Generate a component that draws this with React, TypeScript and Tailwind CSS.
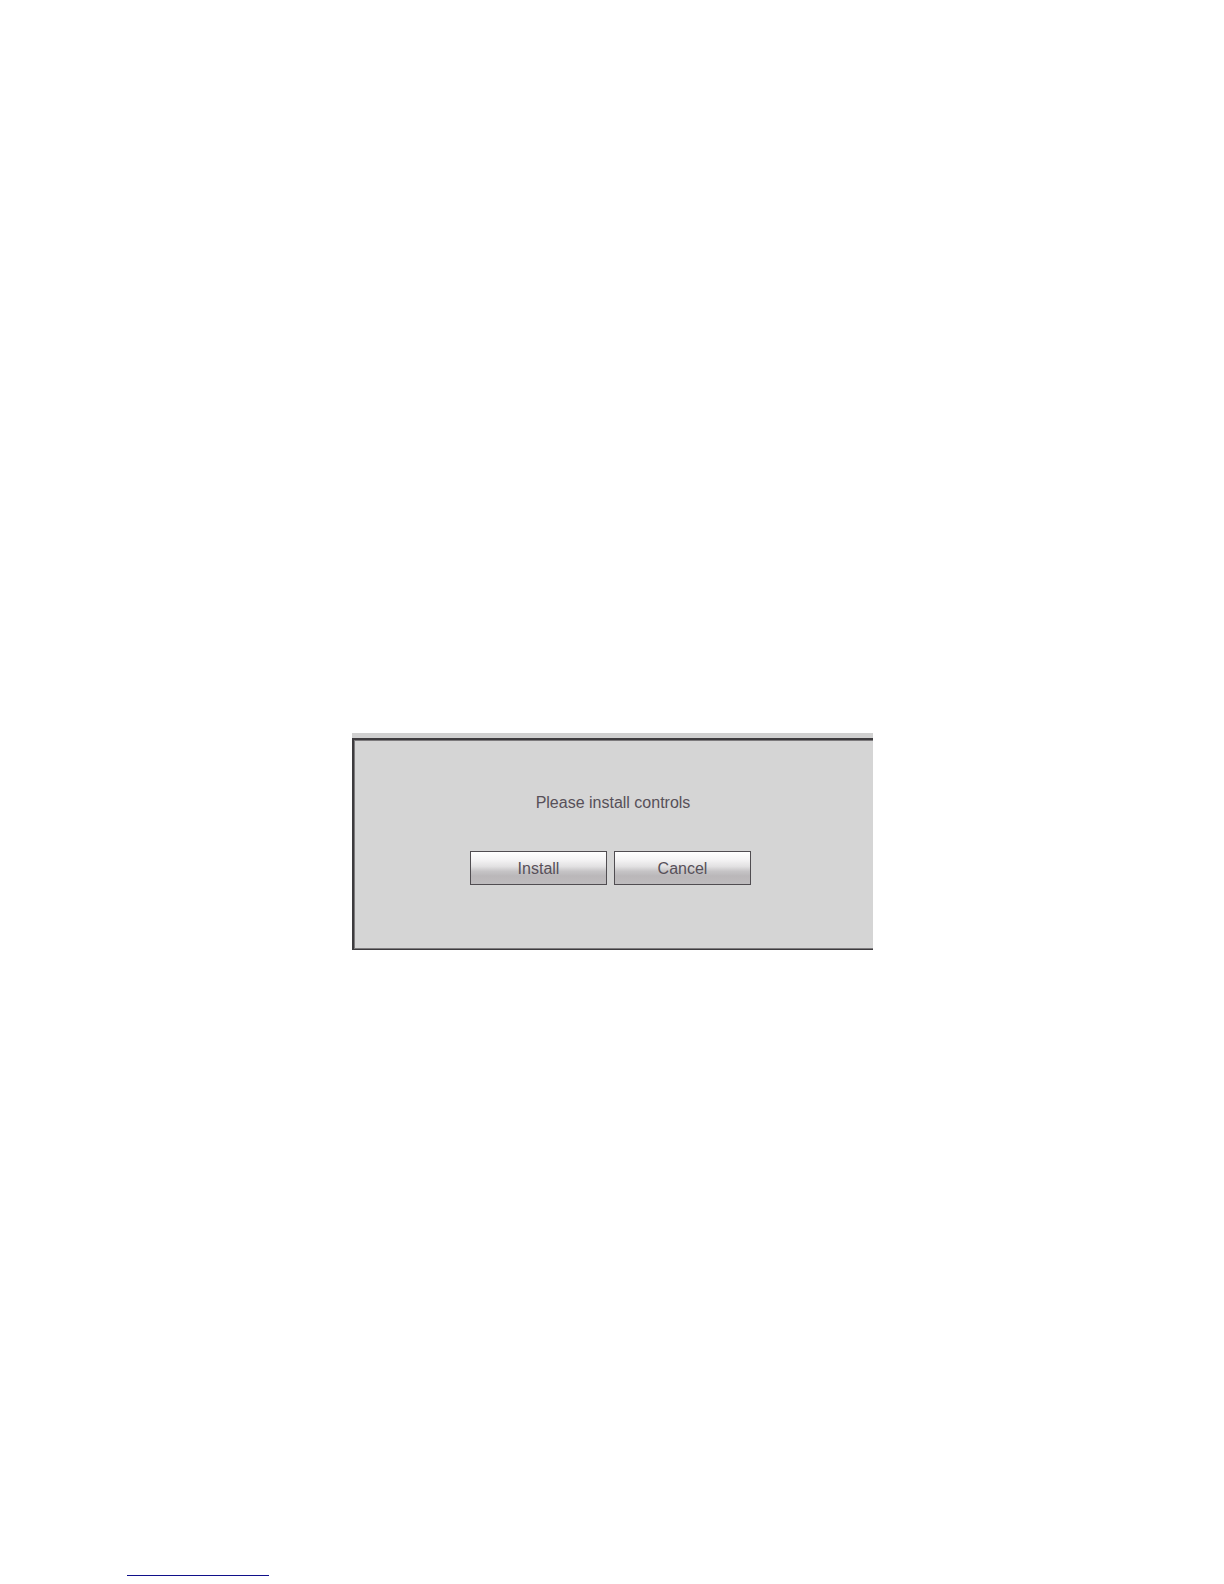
import React from "react";

type DialogButtonProps = {
  label: string;
};

function DialogButton(props: DialogButtonProps) {
  return (
    <button
      type="button"
      className="h-[34px] w-[137px] border border-[#504d51] bg-[linear-gradient(to_bottom,#ffffff_0%,#f4f3f4_25%,#e2e1e2_45%,#c6c4c6_60%,#bab7b9_75%,#bebcbe_100%)] pt-0.5 text-base leading-5 text-[#575059]"
    >
      {props.label}
    </button>
  );
}

function InstallDialog() {
  return (
    <section className="w-[521px] bg-[#d5d5d5] font-['Liberation_Sans',Arial,sans-serif]">
      <div className="h-[5px] bg-[#d0d0d0]" />
      <div className="border-t-2 border-b border-l-2 border-[#3d3b3e] pt-[53px] pb-16 shadow-[inset_1px_1px_#7d7b7d,inset_0_-1px_#7d7b7d]">
        <p className="text-center text-base leading-5 text-[#575059]">
          Please install controls
        </p>
        <div className="mt-[38px] flex justify-center gap-[7px] pr-[5px]">
          <DialogButton label="Install" />
          <DialogButton label="Cancel" />
        </div>
      </div>
    </section>
  );
}

export default function App() {
  return (
    <div className="flex min-h-screen flex-col bg-white">
      <main className="flex justify-center pt-[733px]">
        <InstallDialog />
      </main>
      <footer className="mt-auto px-[127px] pb-2">
        <hr className="w-[142px] border-t border-[#10108a]" />
      </footer>
    </div>
  );
}
